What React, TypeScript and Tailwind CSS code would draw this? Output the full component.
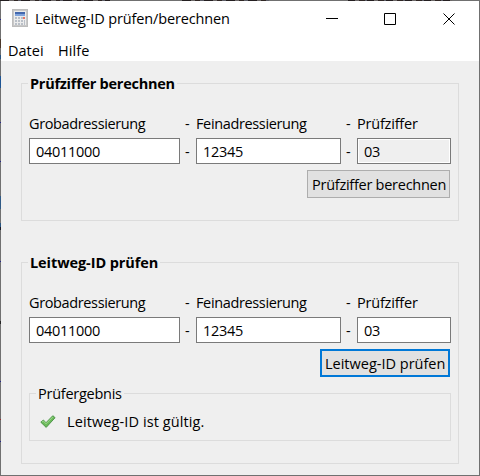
import React from "react";

type TextProps = { children: React.ReactNode; className?: string };

function Text({ children, className = "" }: TextProps) {
  return <span className={`block h-5 whitespace-pre leading-5 ${className}`}>{children}</span>;
}

function CalculatorIcon() {
  return (
    <svg width="16" height="18" viewBox="0 0 16 18" className="shrink-0" shapeRendering="crispEdges">
      <rect x="0.5" y="0.5" width="15" height="17" fill="#c8c8c8" stroke="#bdbdbd" />
      <rect x="2" y="2" width="12" height="14" fill="#ececec" />
      <rect x="3" y="3" width="10" height="2" fill="#4468ad" />
      <rect x="3" y="5" width="10" height="2" fill="#7fa3dc" />
      {[8, 11, 14].map((y) =>
        [3, 6, 9].map((x) => <rect key={`${x}-${y}`} x={x} y={y} width="2" height="2" fill="#b9bfc7" />),
      )}
      <rect x="11" y="8" width="2" height="2" fill="#e87566" />
      <rect x="12" y="11" width="1" height="5" fill="#b9bfc7" />
    </svg>
  );
}

function CheckIcon() {
  return (
    <svg width="16" height="14" viewBox="0 0 16 14" className="shrink-0">
      <path d="M.8 7.2 3.4 5 6 7.7 12.8.7l2.3 2L6.2 12.4Z" fill="#6cbb5b" stroke="#478f45" strokeWidth=".9" strokeLinejoin="round" />
      <path d="M2 7 3.4 6 6 8.8 12.8 2" fill="none" stroke="#9bd889" strokeWidth="1" />
    </svg>
  );
}

function TitleBar() {
  return (
    <header className="flex h-[37px] bg-white pl-[11px]">
      <div className="pt-2"><CalculatorIcon /></div>
      <Text className="ml-[7px] mt-2 w-[206px] tracking-[-0.14px]">Leitweg-ID prüfen/berechnen</Text>
      <div className="ml-[85px] flex pt-3">
        <svg width="130" height="12" viewBox="0 0 130 12">
          <path d="M0 5.5h12M58.5.5h11v11h-11zM117.5.5l11 11M128.5.5l-11 11" fill="none" stroke="#000" />
        </svg>
      </div>
    </header>
  );
}

function Field({ value, className }: { value: string; className: string }) {
  return (
    <div className={`h-[26px] border border-[#7a7a7a] pl-1.5 pt-[3px] ${className}`}>
      <Text className="tracking-[-0.29px]">{value}</Text>
    </div>
  );
}

function IdForm({ readOnly = false }: { readOnly?: boolean }) {
  return (
    <div className="grid grid-cols-[151px_16px_145px_16px_94px] pl-[7px] pt-[17px]">
      <Text className="tracking-[-0.37px]">Grobadressierung</Text>
      <Text className="pl-[5px]">-</Text>
      <Text className="tracking-[-0.36px]">Feinadressierung</Text>
      <Text className="pl-[5px]">-</Text>
      <Text className="tracking-[-0.2px]">Prüfziffer</Text>
      <Field value="04011000" className="mt-1 bg-white" />
      <Text className="pl-[5px] pt-2">-</Text>
      <Field value="12345" className="mt-1 bg-white" />
      <Text className="pl-[5px] pt-2">-</Text>
      <Field value="03" className={readOnly ? "mt-1 bg-[#efefef] shadow-[inset_0_0_0_1px_#fff]" : "mt-1 bg-white"} />
    </div>
  );
}

type GroupProps = { title: string; className: string; titleClass: string; children: React.ReactNode };

function Group({ title, className, titleClass, children }: GroupProps) {
  return (
    <section className={`ml-5 w-[438px] border border-[#dcdcdc] ${className}`}>
      <div className="-mt-[10px] ml-[6px] w-fit bg-[#efefef] px-0.5 font-bold">
        <Text className={titleClass}>{title}</Text>
      </div>
      {children}
    </section>
  );
}

function TopEdge() {
  return (
    <div className="flex h-px bg-[#707070]">
      <div className="h-px w-[110px] bg-[repeating-linear-gradient(90deg,#241f21_0_9px,#6c6868_9px_14px,#302725_14px_18px,#5c5d66_18px_21px)]" />
      <div className="ml-[72px] h-px w-[87px] bg-[repeating-linear-gradient(90deg,#241f21_0_9px,#6c6868_9px_13px,#302725_13px_18px,#5c5d66_18px_22px)]" />
      <div className="ml-[79px] h-px w-[104px] bg-[repeating-linear-gradient(90deg,#241f21_0_7px,#6c6868_7px_11px,#302725_11px_17px,#5c5d66_17px_19px)]" />
    </div>
  );
}

export default function App() {
  return (
    <main className="h-[476px] w-[480px] overflow-hidden bg-[#707070] font-['Open_Sans','Noto_Sans',sans-serif] text-[14.5px] text-black">
      <TopEdge />
      <div className="flex h-[474px]">
        <div className="w-px shrink-0 bg-[linear-gradient(180deg,#0000_0_18px,#25258a_18px_19px,#0000_19px_38px,#4b3729_38px_47px,#0000_47px_54px,#285480_54px_58px,#0000_58px_75px,#1e5594_75px_87px,#0000_87px_121px,#25258a_121px_122px,#0000_122px_160px,#25258a_160px_161px,#0000_161px_195px,#305a86_195px_208px,#0000_208px_222px,#285480_222px_226px,#1c1c26_226px_229px,#0000_229px_260px,#25258a_260px_261px,#0000_261px_320px,#252525_320px_323px,#0000_323px_380px,#25258a_380px_381px,#0000_381px_418px,#962c2c_418px_419px,#0000_419px_440px,#25258a_440px_441px,#0000_441px)]" />
        <div className="w-[478px] bg-[#efefef]">
          <TitleBar />
          <nav className="flex h-[23px] bg-white pl-[7px] pt-[3px]">
            <Text className="w-[50px]">Datei</Text>
            <Text className="tracking-[0.1px]">Hilfe</Text>
          </nav>
          <Group title="Prüfziffer berechnen" titleClass="tracking-[-0.26px]" className="mt-[22px] h-[138px]">
            <div className="mt-[3px]"><IdForm readOnly /></div>
            <div className="ml-[285px] mt-1.5 h-7 w-[143px] border border-[#adadad] bg-[#e1e1e1] pl-1 pt-1">
              <Text className="tracking-[-0.26px]">Prüfziffer berechnen</Text>
            </div>
          </Group>
          <Group title="Leitweg-ID prüfen" titleClass="tracking-[-0.08px]" className="mt-[41px] h-[202px]">
            <div className="mt-[3px]"><IdForm /></div>
            <div className="ml-[298px] mt-1.5 h-7 w-[130px] border-2 border-[#0078d7] bg-[#e1e1e1] pl-[3px] pt-[3px]">
              <Text>Leitweg-ID prüfen</Text>
            </div>
            <section className="ml-[7px] mt-4 h-12 w-[422px] border border-[#dcdcdc]">
              <div className="-mt-[10px] ml-[6px] w-fit bg-[#efefef] px-0.5">
                <Text className="tracking-[-0.26px]">Prüfergebnis</Text>
              </div>
              <div className="ml-2.5 mt-2 flex">
                <div className="mt-[3px]"><CheckIcon /></div>
                <Text className="ml-[11px] tracking-[0.1px]">Leitweg-ID ist gültig.</Text>
              </div>
            </section>
          </Group>
        </div>
      </div>
    </main>
  );
}
